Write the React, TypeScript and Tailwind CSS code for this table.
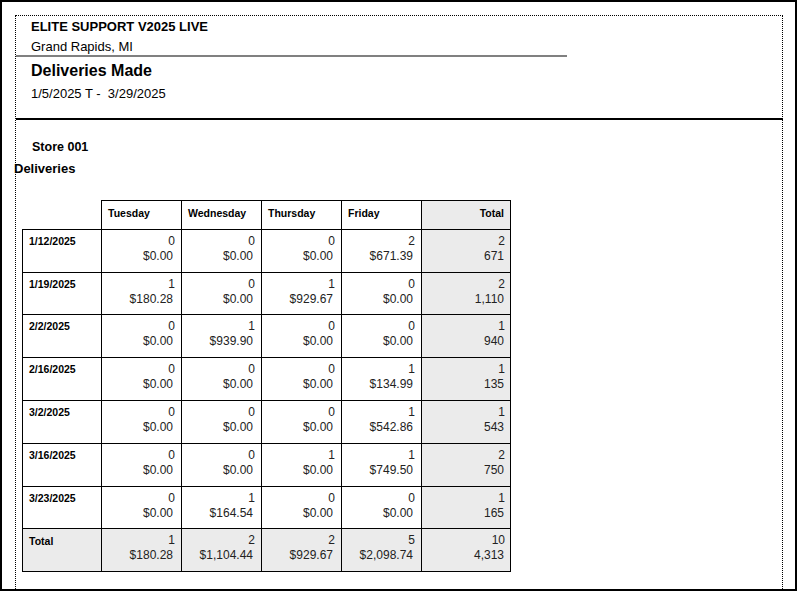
import React from "react";

type Cell = [string, string];

const rows: { date: string; cells: Cell[]; total: Cell; h: string }[] = [
  { date: "1/12/2025", cells: [["0", "$0.00"], ["0", "$0.00"], ["0", "$0.00"], ["2", "$671.39"]], total: ["2", "671"], h: "h-[43px]" },
  { date: "1/19/2025", cells: [["1", "$180.28"], ["0", "$0.00"], ["1", "$929.67"], ["0", "$0.00"]], total: ["2", "1,110"], h: "h-[42px]" },
  { date: "2/2/2025", cells: [["0", "$0.00"], ["1", "$939.90"], ["0", "$0.00"], ["0", "$0.00"]], total: ["1", "940"], h: "h-[43px]" },
  { date: "2/16/2025", cells: [["0", "$0.00"], ["0", "$0.00"], ["0", "$0.00"], ["1", "$134.99"]], total: ["1", "135"], h: "h-[43px]" },
  { date: "3/2/2025", cells: [["0", "$0.00"], ["0", "$0.00"], ["0", "$0.00"], ["1", "$542.86"]], total: ["1", "543"], h: "h-[43px]" },
  { date: "3/16/2025", cells: [["0", "$0.00"], ["0", "$0.00"], ["1", "$0.00"], ["1", "$749.50"]], total: ["2", "750"], h: "h-[43px]" },
  { date: "3/23/2025", cells: [["0", "$0.00"], ["1", "$164.54"], ["0", "$0.00"], ["0", "$0.00"]], total: ["1", "165"], h: "h-[42px]" },
];

const totalRow: { cells: Cell[]; total: Cell } = {
  cells: [["1", "$180.28"], ["2", "$1,104.44"], ["2", "$929.67"], ["5", "$2,098.74"]],
  total: ["10", "4,313"],
};

const days = ["Tuesday", "Wednesday", "Thursday", "Friday"];
const dayW = ["w-[80px]", "w-[80px]", "w-[80px]", "w-[80px]"];

function ValueCell({ v, w, gray, last }: { v: Cell; w: string; gray?: boolean; last?: boolean }) {
  return (
    <div
      className={`${w} h-full border-l border-t border-black pt-[4px] text-right text-[12px] leading-[15px] text-[#222] ${
        gray ? "bg-[#ebebeb]" : "bg-white"
      } ${last ? "border-r pr-[5px]" : "pr-[6px]"}`}
    >
      <div>{v[0]}</div>
      <div className={last ? "pr-[1px]" : "pr-[2px]"}>{v[1]}</div>
    </div>
  );
}

export default function App() {
  return (
    <div className="w-[797px] h-[591px] border-2 border-black bg-white overflow-hidden font-['Liberation_Sans',Arial,sans-serif] text-black">
      <div className="ml-[13px] mt-[13px] w-[768px] h-[620px] border border-dotted border-black">
        <div className="pl-[15px] h-[22px] leading-[22px] text-[13px] font-bold">ELITE SUPPORT V2025 LIVE</div>
        <div className="pl-[15px] h-[17px] leading-[17px] text-[13px]">Grand Rapids, MI</div>
        <div className="w-[551px] h-[2px] bg-[#808080]" />
        <div className="pl-[15px] mt-[4px] h-[20px] leading-[20px] text-[16px] font-bold">Deliveries Made</div>
        <div className="pl-[15px] mt-[3px] h-[20px] leading-[20px] text-[13px] whitespace-pre">1/5/2025 T -  3/29/2025</div>
        <div className="mt-[14px] h-[2px] bg-black -mr-px" />

        <div className="pl-[16px] mt-[20px] h-[15px] leading-[15px] text-[12.5px] font-bold">Store 001</div>
        <div className="-ml-[2px] mt-[6px] h-[15px] leading-[15px] text-[13px] font-bold">Deliveries</div>

        <div className="ml-[6px] mt-[24px] flex flex-col">
          <div className="flex h-[29px]">
            <div className="w-[79px]" />
            {days.map((d, i) => (
              <div key={d} className={`${dayW[i]} border-l border-t border-black pl-[6px] pt-[5px] text-[10.5px] leading-[15px] font-bold`}>
                {d}
              </div>
            ))}
            <div className="w-[90px] border-l border-t border-r border-black bg-[#ebebeb] pr-[6px] pt-[5px] text-right text-[10.5px] leading-[15px] font-bold">
              Total
            </div>
          </div>
          {rows.map((r) => (
            <div key={r.date} className={`flex ${r.h}`}>
              <div className="w-[79px] border-l border-t border-black pl-[6px] pt-[4px] text-[10.5px] leading-[15px] font-bold">
                {r.date}
              </div>
              {r.cells.map((c, i) => (
                <ValueCell key={i} v={c} w={dayW[i]} />
              ))}
              <ValueCell v={r.total} w="w-[90px]" gray last />
            </div>
          ))}
          <div className="flex h-[44px] border-b border-black w-[489px]">
            <div className="w-[79px] h-full border-l border-t border-black bg-[#ebebeb] pl-[6px] pt-[5px] text-[10.5px] leading-[15px] font-bold">
              Total
            </div>
            {totalRow.cells.map((c, i) => (
              <ValueCell key={i} v={c} w={dayW[i]} gray />
            ))}
            <ValueCell v={totalRow.total} w="w-[90px]" gray last />
          </div>
        </div>
      </div>
    </div>
  );
}
